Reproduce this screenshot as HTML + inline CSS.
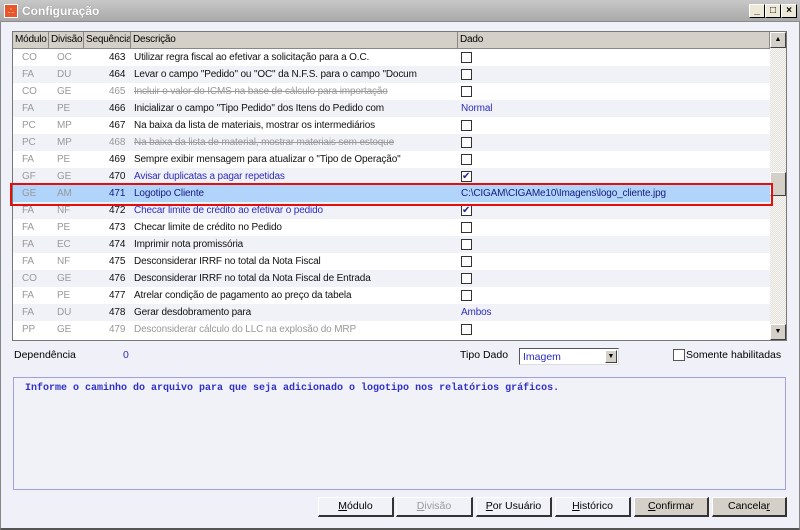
<!DOCTYPE html>
<html><head><meta charset="utf-8"><style>
*{margin:0;padding:0;box-sizing:border-box}
body{width:800px;height:530px;overflow:hidden;font-family:"Liberation Sans",sans-serif;font-size:10.5px;background:#f0f1f8;position:relative}
.abs{position:absolute}
#title{left:0;top:0;width:800px;height:22px;background:linear-gradient(#c8c8c8,#a9a9a9);border-bottom:1px solid #8a8a8a}
#title .t{left:22px;top:4px;color:#fff;font-weight:bold;font-size:12px;text-shadow:0 0 1px #777}
#title .ic{left:4px;top:4px;width:14px;height:14px;background:#e8562a;border:1px solid #fff;color:#fff;font-size:9px;line-height:12px;text-align:center}
.wb{top:4px;width:16px;height:14px;background:#ece9d8;border:1px solid #000;border-top-color:#fff;border-left-color:#fff;font-size:10px;line-height:11px;text-align:center;font-weight:bold}
#frame{left:0;top:22px;width:800px;height:508px;border:1px solid #888;border-top:none;border-bottom:2px solid #555}
#grid{left:12px;top:31px;width:775px;height:310px;border:1px solid #777;background:#fff;overflow:hidden}
.hdr{position:absolute;top:0;height:17px;background:#d4d0c8;border-right:1px solid #888;border-bottom:1px solid #888;line-height:16px;padding-left:2px;color:#000;font-size:10px;white-space:nowrap;overflow:hidden;letter-spacing:-0.2px}
.row{position:absolute;left:0;width:757px;height:17px;line-height:17px;color:#111;font-size:10px;letter-spacing:-0.15px}
.row span{position:absolute;top:0;white-space:nowrap}
.alt{background:#f1f2f8}
.g{color:#999}
.b{color:#2c2cc0}
.s{text-decoration:line-through;color:#999}
.cb{position:absolute;top:3px;left:448px;width:11px;height:11px;border:1px solid #333;background:#fff}
.chk::after{content:"✔";position:absolute;left:0;top:-4px;font-size:10px;color:#22229a}
#sb{left:757px;top:0;width:16px;height:308px;background:repeating-conic-gradient(#e4e2dc 0 25%,#f6f5f2 0 50%) 0 0/2px 2px}
.sbb{position:absolute;left:0;width:16px;height:16px;background:#d4d0c8;border:1px solid #fff;border-right-color:#404040;border-bottom-color:#404040;font-size:7px;text-align:center;line-height:14px}
.btn{position:absolute;top:497px;height:20px;background:#f1f2f8;border:1px solid #fff;border-right:2px solid #333;border-bottom:2px solid #333;text-align:center;line-height:17px;color:#000}
</style></head><body>
<div id="title" class="abs"><div class="abs ic">∴</div><div class="abs t">Configuração</div>
<div class="abs wb" style="left:749px">_</div><div class="abs wb" style="left:765px">□</div><div class="abs wb" style="left:781px">×</div></div>
<div id="frame" class="abs"></div>
<div id="grid" class="abs">
<div class="hdr" style="left:0;width:36px">Módulo</div>
<div class="hdr" style="left:36px;width:35px">Divisão</div>
<div class="hdr" style="left:71px;width:47px">Sequência</div>
<div class="hdr" style="left:118px;width:327px">Descrição</div>
<div class="hdr" style="left:445px;width:312px">Dado</div>
<div id="sb" class="abs"><div class="sbb" style="top:0">▲</div><div class="sbb" style="top:140px;height:24px"></div><div class="sbb" style="top:292px">▼</div></div>
</div>
<div id="rows" class="abs" style="left:13px;top:49px;width:757px;height:290px;overflow:hidden"></div>
<div class="abs" style="left:10px;top:183px;width:763px;height:23px;border:2px solid #e01010;z-index:5"></div>
<script>
const R=[
["CO","OC","463","Utilizar regra fiscal ao efetivar a solicitação para a O.C.","","cb"],
["FA","DU","464","Levar o campo \"Pedido\" ou \"OC\" da N.F.S. para o campo \"Docum","","cb"],
["CO","GE","465","Incluir o valor do ICMS na base de cálculo para importação","s","cb"],
["FA","PE","466","Inicializar o campo \"Tipo Pedido\" dos Itens do Pedido com","","Normal"],
["PC","MP","467","Na baixa da lista de materiais, mostrar os intermediários","","cb"],
["PC","MP","468","Na baixa da lista de material, mostrar materiais sem estoque","s","cb"],
["FA","PE","469","Sempre exibir mensagem para atualizar o \"Tipo de Operação\"","","cb"],
["GF","GE","470","Avisar duplicatas a pagar repetidas","b","chk"],
["GE","AM","471","Logotipo Cliente","sel","C:\\CIGAM\\CIGAMe10\\Imagens\\logo_cliente.jpg"],
["FA","NF","472","Checar limite de crédito ao efetivar o pedido","b","chk"],
["FA","PE","473","Checar limite de crédito no Pedido","","cb"],
["FA","EC","474","Imprimir nota promissória","","cb"],
["FA","NF","475","Desconsiderar IRRF no total da Nota Fiscal","","cb"],
["CO","GE","476","Desconsiderar IRRF no total da Nota Fiscal de Entrada","","cb"],
["FA","PE","477","Atrelar condição de pagamento ao preço da tabela","","cb"],
["FA","DU","478","Gerar desdobramento para","","Ambos"],
["PP","GE","479","Desconsiderar cálculo do LLC na explosão do MRP","g","cb"]];
let h="";
R.forEach((r,i)=>{
 const cls=i%2?"alt":"";
 let st=r[4]=="s"?"s":r[4]=="g"?"g":r[4]=="b"?"b":r[4]=="sel"?"b":"";
 let seqc=(r[4]=="s"||r[4]=="g")?"g":"";
 const sel=r[4]=="sel";
 let d=r[5]=="cb"?'<div class="cb"></div>':r[5]=="chk"?'<div class="cb chk"></div>':`<span class="b" style="left:448px;${sel?'color:#1a1a80':''}">${r[5]}</span>`;
 const bg=sel?"background:#b0d4fa;color:#1a1a80":"";
 h+=`<div class="row ${cls}" style="top:${i*17}px;${bg}"><span class="g" style="left:9px">${r[0]}</span><span class="g" style="left:44px">${r[1]}</span><span class="${seqc}" style="left:96px">${r[2]}</span><span class="${sel?'':st}" style="left:121px">${r[3]}</span>${d}</div>`;
});
document.getElementById("rows").innerHTML=h;
</script>
<div class="abs" style="left:14px;top:349px">Dependência</div>
<div class="abs" style="left:123px;top:349px;color:#2c2cc0">0</div>
<div class="abs" style="left:460px;top:349px">Tipo Dado</div>
<div class="abs" style="left:519px;top:348px;width:100px;height:17px;border:1px solid #555;border-right-color:#ddd;border-bottom-color:#ddd;background:#fff;color:#2c2cc0;padding:2px 3px">Imagem<div class="abs" style="right:1px;top:1px;width:12px;height:13px;background:#d4d0c8;border:1px solid #fff;border-right-color:#404040;border-bottom-color:#404040;font-size:7px;color:#000;text-align:center;line-height:11px">▼</div></div>
<div class="abs" style="left:673px;top:349px;width:12px;height:12px;border:1px solid #555;background:#fff"></div>
<div class="abs" style="left:686px;top:349px;font-size:10.5px">Somente habilitadas</div>
<div class="abs" style="left:13px;top:377px;width:773px;height:113px;border:1px solid #a0a0e0;background:#f1f2f8;font-family:'Liberation Mono',monospace;font-weight:bold;color:#3030c8;font-size:10px;padding:5px 11px">Informe o caminho do arquivo para que seja adicionado o logotipo nos relatórios gráficos.</div>
<div class="btn" style="left:318px;width:76px"><u>M</u>ódulo</div>
<div class="btn" style="left:396px;width:77px;color:#999"><u>D</u>ivisão</div>
<div class="btn" style="left:476px;width:76px"><u>P</u>or Usuário</div>
<div class="btn" style="left:555px;width:76px"><u>H</u>istórico</div>
<div class="btn" style="left:634px;width:75px;background:#d4d0c8"><u>C</u>onfirmar</div>
<div class="btn" style="left:712px;width:75px;background:#d4d0c8">Cancela<u>r</u></div>
</body></html>
